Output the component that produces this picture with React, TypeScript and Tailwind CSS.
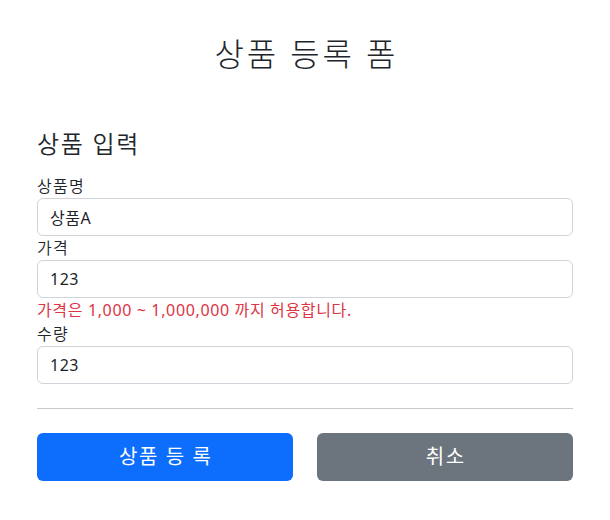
import React from "react";

const font = { fontFamily: '"Noto Sans", "Noto Sans CJK KR", sans-serif' };

function Field({ label, value, error }: { label: string; value: string; error?: string }) {
  return (
    <div>
      <label className="block text-[16px] leading-[24px] text-[#212529] font-[350] tracking-[0.08em]">{label}</label>
      <input
        readOnly
        value={value}
        className="block w-full h-[38px] px-[12px] border border-[#ced4da] rounded-[6px] text-[16px] text-[#212529] font-normal bg-white outline-none tracking-[0.03em]"
        style={font}
      />
      {error && <div className="text-[16px] leading-[24px] text-[#dc3545] font-normal tracking-[0.04em]">{error}</div>}
    </div>
  );
}

export default function App() {
  return (
    <div className="min-h-[520px] bg-white text-[#212529]" style={font}>
      <div className="max-w-[560px] mx-auto px-[12px]">
        <div className="pt-[35px] mb-[56px] text-center">
          <h2 className="text-[32px] leading-[38px] font-light tracking-[0.09em] pl-[0.09em]">상품 등록 폼</h2>
        </div>
        <h4 className="text-[24px] leading-[29px] font-[350] mb-[16px] tracking-[0.07em]">상품 입력</h4>
        <Field label="상품명" value="상품A" />
        <Field label="가격" value="123" error="가격은 1,000 ~ 1,000,000 까지 허용합니다." />
        <Field label="수량" value="123" />
        <hr className="my-[24px] border-0 border-t border-[#c8c9ca]" />
        <div className="grid grid-cols-2 gap-[24px]">
          <button className="h-[48px] rounded-[6px] bg-[#0d6efd] text-white text-[20px] font-normal tracking-[0.08em] pl-[0.08em]">상품 등 록</button>
          <button className="h-[48px] rounded-[6px] bg-[#6c757d] text-white text-[20px] font-normal tracking-[0.08em] pl-[0.08em]">취소</button>
        </div>
      </div>
    </div>
  );
}
